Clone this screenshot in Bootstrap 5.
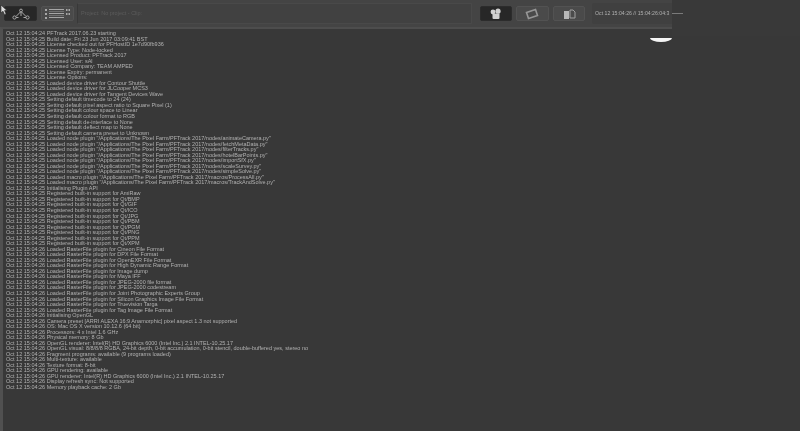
<!DOCTYPE html>
<html lang="en">
<head>
<meta charset="utf-8">
<title>PFTrack log</title>
<link rel="stylesheet" href="https://cdn.jsdelivr.net/npm/bootstrap@5.3.0/dist/css/bootstrap.min.css">
<style>
html,body{height:431px;overflow:hidden;background:#383838;font-family:"Liberation Sans",Arial,sans-serif}
.app-shell{width:800px;height:431px;position:relative;overflow:hidden;background:#383838}
.tool-bar{height:27px;background:#444;padding:3px 0 3px 4px;filter:blur(.6px)}
.tool-btn{width:33px;height:15px;margin-top:3px;background:#4a4a4a;border:1px solid #525252;border-radius:2px;padding:0;color:#bbb}
.tool-btn.on{background:#272727;border-color:#2c2c2c}
.tool-btn svg{display:block;margin:auto}
.group-a{gap:4px;width:72px}
.group-b{gap:4px;width:105px;margin-left:8px}
.project-box{width:395px;margin-left:1px;height:21px;background:#414141;border:1px solid #494949;border-left-color:#383838;border-radius:1px;font-size:5.5px;color:#5c5c5c;padding-left:3px;line-height:19px}
.time-box{width:90px;height:21px;margin-left:7px;background:#404040;border-radius:2px;font-size:5.2px;line-height:21px;color:#b0b0b0;padding-left:3px;white-space:nowrap;overflow:hidden}
.log-area{height:404px;border-top:2px solid #4d4d4d;border-left:3px solid #505050;background:#383838;padding:2px 0 0 3px}
.log-text{font-size:5.5px;line-height:5.53px;color:#b2b2b2;white-space:pre;filter:blur(.45px);margin:0;font-family:"Liberation Sans",Arial,sans-serif}
.patch-over{position:absolute;left:672px;top:0;width:128px;height:36px;background:#393939;filter:blur(.6px)}
.time-tail{position:absolute;left:672px;top:13px;width:11px;height:1px;background:#7a7a7a}
.glare{position:absolute;left:650px;top:38px;width:22px;height:4px;background:#f4f4f4;border-radius:0 0 50% 50%/0 0 100% 100%;filter:blur(.6px)}
.cursor-mark{position:absolute;left:0;top:5px}
</style>
</head>
<body>
<div class="app-shell">
  <div class="tool-bar d-flex align-items-start">
    <div class="group-a d-flex">
      <button class="tool-btn on" aria-label="Nodes"><svg width="20" height="12" viewBox="0 0 20 12"><g fill="none" stroke="#a8a8a8" stroke-width="1"><circle cx="10" cy="2.5" r="1.4"/><circle cx="3.5" cy="9.5" r="1.6"/><circle cx="16.5" cy="9.5" r="1.6"/><path d="M9.4 4 5 8.5M10.6 4 15 8.5M10 4v4M5 9.5h2.5M12.5 9.5H15"/></g></svg></button>
      <button class="tool-btn" aria-label="List"><svg width="28" height="13" viewBox="0 0 28 13"><g fill="#a6a6a6"><rect x="1" y="2" width="2" height="2"/><rect x="1" y="6" width="2" height="2"/><rect x="1" y="10" width="2" height="2"/><rect x="5" y="2" width="15" height="1"/><rect x="5" y="6" width="15" height="1"/><rect x="5" y="10" width="15" height="1"/><rect x="5" y="4" width="15" height="1" opacity=".4"/><rect x="5" y="8" width="15" height="1" opacity=".4"/><rect x="22" y="2" width="1.5" height="2"/><rect x="24.5" y="2" width="1.5" height="2"/><rect x="22" y="6" width="1.5" height="2"/><rect x="24.5" y="6" width="1.5" height="2"/></g></svg></button>
    </div>
    <div class="project-box">Project: No project - Clip:</div>
    <div class="group-b d-flex">
      <button class="tool-btn on" aria-label="Camera"><svg width="14" height="12" viewBox="0 0 14 12"><g fill="#d0d0d0"><circle cx="4" cy="4" r="2.4"/><circle cx="9" cy="3.2" r="2.6"/><rect x="3.5" y="5.5" width="7" height="5.5" rx="1"/></g></svg></button>
      <button class="tool-btn" aria-label="Clip"><svg width="14" height="12" viewBox="0 0 14 12"><g fill="none" stroke="#969696" stroke-width="1.6"><path d="M1.5 4.5 10.5 1.5 12.5 7.5 3.5 10.5Z"/></g></svg></button>
      <button class="tool-btn" aria-label="Files"><svg width="14" height="12" viewBox="0 0 14 12"><path d="M2 3h5v8H2z" fill="#b8b8b8"/><path d="M8 2h3l2 2v6H8z" fill="none" stroke="#a0a0a0"/></svg></button>
    </div>
    <div class="time-box">Oct 12 15:04:26 // 15:04:26:04:3</div>
  </div>
  <div class="log-area"><pre class="log-text">Oct 12 15:04:24 PFTrack 2017.06.23 starting
Oct 12 15:04:25 Build date: Fri 23 Jun 2017 03:09:41 BST
Oct 12 15:04:25 License checked out for PFHostID 1e7d90fb936
Oct 12 15:04:25 License Type: Node-locked
Oct 12 15:04:25 Licensed Product: PFTrack 2017
Oct 12 15:04:25 Licensed User: sAl
Oct 12 15:04:25 Licensed Company: TEAM AMPED
Oct 12 15:04:25 License Expiry: permanent
Oct 12 15:04:25 License Options:
Oct 12 15:04:25 Loaded device driver for Contour Shuttle
Oct 12 15:04:25 Loaded device driver for JLCooper MCS3
Oct 12 15:04:25 Loaded device driver for Tangent Devices Wave
Oct 12 15:04:25 Setting default timecode to 24 (24)
Oct 12 15:04:25 Setting default pixel aspect ratio to Square Pixel (1)
Oct 12 15:04:25 Setting default colour space to Linear
Oct 12 15:04:25 Setting default colour format to RGB
Oct 12 15:04:25 Setting default de-interlace to None
Oct 12 15:04:25 Setting default deflect map to None
Oct 12 15:04:25 Setting default camera preset to Unknown
Oct 12 15:04:25 Loaded node plugin "/Applications/The Pixel Farm/PFTrack 2017/nodes/animateCamera.py"
Oct 12 15:04:25 Loaded node plugin "/Applications/The Pixel Farm/PFTrack 2017/nodes/fetchMetaData.py"
Oct 12 15:04:25 Loaded node plugin "/Applications/The Pixel Farm/PFTrack 2017/nodes/filterTracks.py"
Oct 12 15:04:25 Loaded node plugin "/Applications/The Pixel Farm/PFTrack 2017/nodes/hotelBarPoints.py"
Oct 12 15:04:25 Loaded node plugin "/Applications/The Pixel Farm/PFTrack 2017/nodes/importSfX.py"
Oct 12 15:04:25 Loaded node plugin "/Applications/The Pixel Farm/PFTrack 2017/nodes/scaleSurvey.py"
Oct 12 15:04:25 Loaded node plugin "/Applications/The Pixel Farm/PFTrack 2017/nodes/simpleSolve.py"
Oct 12 15:04:25 Loaded macro plugin "/Applications/The Pixel Farm/PFTrack 2017/macros/ProcessAll.py"
Oct 12 15:04:25 Loaded macro plugin "/Applications/The Pixel Farm/PFTrack 2017/macros/TrackAndSolve.py"
Oct 12 15:04:25 Initialising Plugin API
Oct 12 15:04:25 Registered built-in support for AmiRaw
Oct 12 15:04:25 Registered built-in support for Qt/BMP
Oct 12 15:04:25 Registered built-in support for Qt/GIF
Oct 12 15:04:25 Registered built-in support for Qt/ICO
Oct 12 15:04:25 Registered built-in support for Qt/JPG
Oct 12 15:04:25 Registered built-in support for Qt/PBM
Oct 12 15:04:25 Registered built-in support for Qt/PGM
Oct 12 15:04:25 Registered built-in support for Qt/PNG
Oct 12 15:04:25 Registered built-in support for Qt/PPM
Oct 12 15:04:25 Registered built-in support for Qt/XPM
Oct 12 15:04:26 Loaded RasterFile plugin for Cineon File Format
Oct 12 15:04:26 Loaded RasterFile plugin for DPX File Format
Oct 12 15:04:26 Loaded RasterFile plugin for OpenEXR File Format
Oct 12 15:04:26 Loaded RasterFile plugin for High Dynamic Range Format
Oct 12 15:04:26 Loaded RasterFile plugin for Image dump
Oct 12 15:04:26 Loaded RasterFile plugin for Maya IFF
Oct 12 15:04:26 Loaded RasterFile plugin for JPEG-2000 file format
Oct 12 15:04:26 Loaded RasterFile plugin for JPEG-2000 codestream
Oct 12 15:04:26 Loaded RasterFile plugin for Joint Photographic Experts Group
Oct 12 15:04:26 Loaded RasterFile plugin for Silicon Graphics Image File Format
Oct 12 15:04:26 Loaded RasterFile plugin for Truevision Targa
Oct 12 15:04:26 Loaded RasterFile plugin for Tag Image File Format
Oct 12 15:04:26 Initialising OpenGL
Oct 12 15:04:26 Camera preset [ARRI ALEXA 16:9 Anamorphic] pixel aspect 1.3 not supported
Oct 12 15:04:26 OS: Mac OS X version 10.12.6 (64 bit)
Oct 12 15:04:26 Processors: 4 x Intel 1.6 GHz
Oct 12 15:04:26 Physical memory: 8 Gb
Oct 12 15:04:26 OpenGL renderer: Intel(R) HD Graphics 6000 (Intel Inc.) 2.1 INTEL-10.25.17
Oct 12 15:04:26 OpenGL visual: 8/8/8/8 RGBA, 24-bit depth, 0-bit accumulation, 0-bit stencil, double-buffered yes, stereo no
Oct 12 15:04:26 Fragment programs: available (9 programs loaded)
Oct 12 15:04:26 Multi-texture: available
Oct 12 15:04:26 Texture format: 8-bit
Oct 12 15:04:26 GPU rendering: available
Oct 12 15:04:26 GPU renderer: Intel(R) HD Graphics 6000 (Intel Inc.) 2.1 INTEL-10.25.17
Oct 12 15:04:26 Display refresh sync: Not supported
Oct 12 15:04:26 Memory playback cache: 2 Gb</pre></div>
  <div class="patch-over"></div>
  <div class="time-tail"></div>
  <div class="glare"></div>
  <svg class="cursor-mark" width="8" height="11" viewBox="0 0 8 11" aria-hidden="true"><path d="M1 0v8l2-1.8 1.5 3.5 1.6-.7L4.6 5.6H7Z" fill="#ddd" stroke="#222" stroke-width=".6"/></svg>
</div>
<script src="https://cdn.jsdelivr.net/npm/bootstrap@5.3.0/dist/js/bootstrap.bundle.min.js"></script>
</body>
</html>
